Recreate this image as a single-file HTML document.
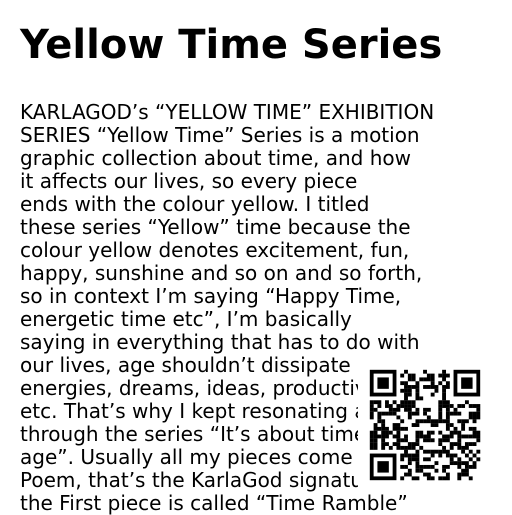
<!DOCTYPE html>
<html><head><style>
body{margin:0;width:512px;height:512px;overflow:hidden;background:#fff;font-family:"DejaVu Sans","Liberation Sans",sans-serif;color:#000}
h1{position:absolute;left:20px;top:22px;margin:0;font-size:40px;line-height:46px;font-weight:bold;white-space:nowrap}
p{position:absolute;left:20px;top:101px;margin:0;font-size:20px;line-height:23px;white-space:nowrap}
.bg{position:absolute;left:358px;top:358px;width:134px;height:134px;background:#fff}
svg{position:absolute;left:366px;top:366px}
</style></head><body>
<h1>Yellow Time Series</h1>
<p>KARLAGOD’s “YELLOW TIME” EXHIBITION<br>SERIES “Yellow Time” Series is a motion<br>graphic collection about time, and how<br>it affects our lives, so every piece<br>ends with the colour yellow. I titled<br>these series “Yellow” time because the<br>colour yellow denotes excitement, fun,<br>happy, sunshine and so on and so forth,<br>so in context I’m saying “Happy Time,<br>energetic time etc”, I’m basically<br>saying in everything that has to do with<br>our lives, age shouldn’t dissipate our<br>energies, dreams, ideas, productivity<br>etc. That’s why I kept resonating all<br>through the series “It’s about time not<br>age”. Usually all my pieces come with a<br>Poem, that’s the KarlaGod signature, and<br>the First piece is called “Time Ramble”</p>
<div class="bg"></div>
<svg width="118" height="118" viewBox="-1 -1 31 31"><rect x="-1" y="-1" width="31" height="31" fill="#fff"/><g id="q" fill="#000"></g></svg>
<script>
var g=document.getElementById('q'),N=29,s=12345,h='';
function r(){s=(s*1103515245+12345)%2147483648;return s/2147483648;}
function f(x,y){return (x<8&&y<8)||(x>=N-8&&y<8)||(x<8&&y>=N-8);}
for(var y=0;y<N;y++)for(var x=0;x<N;x++){if(!f(x,y)&&r()<0.5)h+='<rect x="'+x+'" y="'+y+'" width="1.02" height="1.02"/>';}
[[0,0],[N-7,0],[0,N-7]].forEach(function(p){h+='<rect x="'+p[0]+'" y="'+p[1]+'" width="7" height="7"/><rect x="'+(p[0]+1)+'" y="'+(p[1]+1)+'" width="5" height="5" fill="#fff"/><rect x="'+(p[0]+2)+'" y="'+(p[1]+2)+'" width="3" height="3"/>';});
g.innerHTML=h;
</script>
</body></html>
